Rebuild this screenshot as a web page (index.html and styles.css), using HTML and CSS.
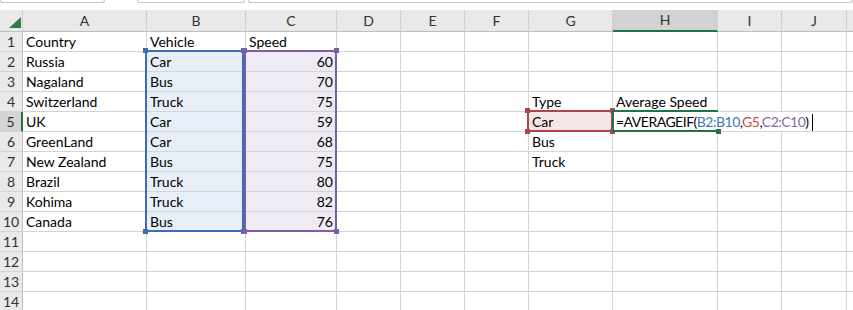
FILE: index.html
```html
<!DOCTYPE html>
<html lang="en">
<head>
    <meta charset="UTF-8">
    <title>Book1 - Excel</title>
    <link rel="stylesheet" href="styles.css">
</head>
<body>
    <div class="topbar">
        <div class="box name-box"></div>
        <div class="box fx-box"></div>
        <div class="box formula-box"></div>
    </div>

    <div class="sheet">
        <div class="row head">
            <div class="corner">
                <svg width="22" height="21" viewBox="0 0 22 21"><polygon points="21,7 21,18 9,18" fill="#2f7d45"/></svg>
            </div>
            <div>A</div><div>B</div><div>C</div><div>D</div><div>E</div>
            <div>F</div><div>G</div><div class="sel">H</div><div>I</div><div>J</div><div></div>
        </div>

        <div class="row">
            <div class="rh">1</div>
            <div>Country</div><div>Vehicle</div><div>Speed</div>
            <div></div><div></div><div></div><div></div><div></div><div></div><div></div><div></div>
        </div>
        <div class="row">
            <div class="rh">2</div>
            <div>Russia</div><div class="fb">Car</div><div class="fc num">60</div>
            <div></div><div></div><div></div><div></div><div></div><div></div><div></div><div></div>
        </div>
        <div class="row">
            <div class="rh">3</div>
            <div>Nagaland</div><div class="fb">Bus</div><div class="fc num">70</div>
            <div></div><div></div><div></div><div></div><div></div><div></div><div></div><div></div>
        </div>
        <div class="row">
            <div class="rh">4</div>
            <div>Switzerland</div><div class="fb">Truck</div><div class="fc num">75</div>
            <div></div><div></div><div></div><div>Type</div><div>Average Speed</div><div></div><div></div><div></div>
        </div>
        <div class="row">
            <div class="rh sel">5</div>
            <div>UK</div><div class="fb">Car</div><div class="fc num">59</div>
            <div></div><div></div><div></div><div class="fr">Car</div><div></div><div></div><div></div><div></div>
        </div>
        <div class="row">
            <div class="rh">6</div>
            <div>GreenLand</div><div class="fb">Car</div><div class="fc num">68</div>
            <div></div><div></div><div></div><div>Bus</div><div></div><div></div><div></div><div></div>
        </div>
        <div class="row">
            <div class="rh">7</div>
            <div>New Zealand</div><div class="fb">Bus</div><div class="fc num">75</div>
            <div></div><div></div><div></div><div>Truck</div><div></div><div></div><div></div><div></div>
        </div>
        <div class="row">
            <div class="rh">8</div>
            <div>Brazil</div><div class="fb">Truck</div><div class="fc num">80</div>
            <div></div><div></div><div></div><div></div><div></div><div></div><div></div><div></div>
        </div>
        <div class="row">
            <div class="rh">9</div>
            <div>Kohima</div><div class="fb">Truck</div><div class="fc num">82</div>
            <div></div><div></div><div></div><div></div><div></div><div></div><div></div><div></div>
        </div>
        <div class="row">
            <div class="rh">10</div>
            <div>Canada</div><div class="fb">Bus</div><div class="fc num">76</div>
            <div></div><div></div><div></div><div></div><div></div><div></div><div></div><div></div>
        </div>
        <div class="row">
            <div class="rh">11</div>
            <div></div><div></div><div></div><div></div><div></div><div></div><div></div><div></div><div></div><div></div><div></div>
        </div>
        <div class="row">
            <div class="rh">12</div>
            <div></div><div></div><div></div><div></div><div></div><div></div><div></div><div></div><div></div><div></div><div></div>
        </div>
        <div class="row">
            <div class="rh">13</div>
            <div></div><div></div><div></div><div></div><div></div><div></div><div></div><div></div><div></div><div></div><div></div>
        </div>
        <div class="row">
            <div class="rh">14</div>
            <div></div><div></div><div></div><div></div><div></div><div></div><div></div><div></div><div></div><div></div><div></div>
        </div>

        <!-- reference highlights drawn over the grid -->
        <div class="range blue"><i class="tl"></i><i class="tr"></i><i class="bl"></i><i class="br"></i></div>
        <div class="range purple"><i class="tl"></i><i class="tr"></i><i class="bl"></i><i class="br"></i></div>
        <div class="range red"><i class="tl"></i><i class="tr"></i><i class="bl"></i><i class="br"></i></div>

        <div class="editor">=AVERAGEIF(<span class="ref-b">B2:B10</span>,<span class="ref-r">G5</span>,<span class="ref-p">C2:C10</span>)<span class="caret"></span></div>
        <div class="active"><i class="fill"></i></div>
    </div>
</body>
</html>
```

FILE: styles.css
```css
body {
    margin: 0;
    font-family: Lato, "Liberation Sans", sans-serif;
    font-size: 14px;
    color: #000;
    background: #fff;
    overflow: hidden;
}

.topbar {
    display: flex;
    height: 10px;
}

.box {
    height: 2px;
    border: 1px solid #c6c6c6;
    border-top: none;
    border-radius: 0 0 3px 3px;
}

.name-box {
    width: 103px;
}

.fx-box {
    width: 106px;
    margin-left: 32px;
}

.formula-box {
    flex: 1;
    margin-left: 3px;
}

.sheet {
    position: relative;
}

.row {
    display: grid;
    grid-template-columns: 23px 124px 99px 91px 64px 64px 64px 84px 105px 64px 65px 1fr;
    height: 20px;
}

.row > div {
    box-sizing: border-box;
    border-right: 1px solid #d4d4d4;
    border-bottom: 1px solid #d4d4d4;
    padding: 0 3px;
    line-height: 19px;
    white-space: nowrap;
}

.row .num {
    text-align: right;
}

.row .rh {
    background: #e9e9e9;
    color: #333;
    text-align: center;
    padding: 0;
    border-right-color: #bfbfbf;
    border-bottom-color: #d4d4d4;
}

.row .rh.sel {
    background: #d4d4d4;
    border-right: 2px solid #217346;
}

.head {
    height: 22px;
}

.head > div {
    background: #e9e9e9;
    color: #333;
    text-align: center;
    line-height: 21px;
    border-right-color: #cfcfcf;
    border-bottom-color: #bdbdbd;
}

.row.head .sel {
    background: #d2d2d2;
    border-bottom: 2px solid #217346;
    line-height: 20px;
}

.row .corner {
    padding: 0;
    line-height: 0;
}

.fb {
    background: #e8eef8;
}

.fc {
    background: #efebf4;
}

.fr {
    background: #f6e6e6;
}

/* colored reference ranges */
.range {
    position: absolute;
    box-sizing: border-box;
    border: 2px solid currentColor;
}

.range i,
.active i {
    position: absolute;
    width: 5px;
    height: 5px;
    background: currentColor;
}

.range .tl { left: -4px; top: -4px; }
.range .tr { right: -4px; top: -4px; }
.range .bl { left: -4px; bottom: -4px; }
.range .br { right: -4px; bottom: -4px; }

.blue {
    color: #3a6db3;
    left: 145px;
    top: 40px;
    width: 99px;
    height: 182px;
}

.purple {
    color: #7f5ca8;
    left: 244px;
    top: 40px;
    width: 93px;
    height: 182px;
}

.red {
    color: #b3434b;
    left: 527px;
    top: 100px;
    width: 86px;
    height: 22px;
}

.editor {
    position: absolute;
    left: 614px;
    top: 102px;
    width: 198px;
    height: 19px;
    padding-left: 2px;
    box-sizing: border-box;
    background: #fff;
    line-height: 19px;
    letter-spacing: -0.5px;
    white-space: nowrap;
}

.ref-b { color: #4475b8; }
.ref-r { color: #c0504d; }
.ref-p { color: #8466a9; }

.caret {
    display: inline-block;
    width: 1px;
    height: 17px;
    margin-left: 3px;
    vertical-align: -4px;
    background: #000;
}

.active {
    position: absolute;
    color: #217346;
    left: 612px;
    top: 100px;
    width: 106px;
    height: 22px;
    box-sizing: border-box;
    border: 2px solid #217346;
    border-right: none;
}

.active .fill {
    right: -3px;
    bottom: -4px;
}
```
